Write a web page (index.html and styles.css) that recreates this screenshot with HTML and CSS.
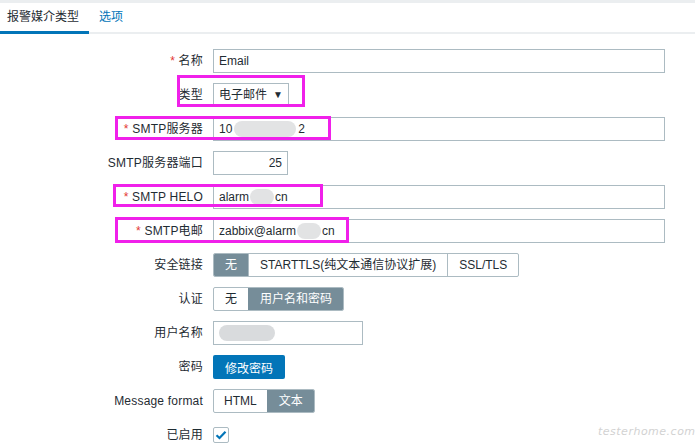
FILE: index.html
```html
<!DOCTYPE html>
<html>
<head>
<meta charset="utf-8">
<link rel="stylesheet" href="styles.css">
</head>
<body>
<div class="topstrip"></div>
<div class="tabs">
  <div class="tab active">报警媒介类型</div>
  <div class="tab link">选项</div>
</div>
<div class="form">
  <div class="label"><span class="req">*</span> 名称</div>
  <div class="field"><div class="input wide">Email</div></div>

  <div class="label">类型</div>
  <div class="field"><div class="input select">电子邮件<span class="arrow">▼</span></div></div>

  <div class="label"><span class="req">*</span> SMTP服务器</div>
  <div class="field"><div class="input wide">10<span class="blur b1"></span>2</div></div>

  <div class="label">SMTP服务器端口</div>
  <div class="field"><div class="input port">25</div></div>

  <div class="label"><span class="req">*</span> SMTP HELO</div>
  <div class="field"><div class="input wide">alarm<span class="blur b2"></span>cn</div></div>

  <div class="label"><span class="req">*</span> SMTP电邮</div>
  <div class="field"><div class="input wide">zabbix@alarm<span class="blur b3"></span>cn</div></div>

  <div class="label">安全链接</div>
  <div class="field"><div class="seg"><span class="on">无</span><span>STARTTLS(纯文本通信协议扩展)</span><span>SSL/TLS</span></div></div>

  <div class="label">认证</div>
  <div class="field"><div class="seg"><span>无</span><span class="on">用户名和密码</span></div></div>

  <div class="label">用户名称</div>
  <div class="field"><div class="input user"><span class="blur b4"></span></div></div>

  <div class="label">密码</div>
  <div class="field"><button class="btn">修改密码</button></div>

  <div class="label">Message format</div>
  <div class="field"><div class="seg"><span class="w1">HTML</span><span class="on">文本</span></div></div>

  <div class="label">已启用</div>
  <div class="field"><span class="check"><svg width="12" height="10" viewBox="0 0 12 10"><path d="M1.5 5.2 L4.5 8 L10.5 1.8" fill="none" stroke="#0275b8" stroke-width="2.2"/></svg></span></div>
</div>

<div class="mark m1"></div>
<div class="mark m2"></div>
<div class="mark m3"></div>
<div class="mark m4"></div>
<div class="water">testerhome.com</div>
</body>
</html>
```

FILE: styles.css
```css
html, body {
  margin: 0;
  padding: 0;
  background: #fff;
  font-family: "Liberation Sans", Arial, "Noto Sans CJK SC", sans-serif;
  font-size: 12px;
  color: #1f2c33;
  width: 695px;
  height: 448px;
  overflow: hidden;
  position: relative;
}
.topstrip {
  height: 3px;
  background: #ebeef0;
}
.tabs {
  display: flex;
  height: 29px;
  border-bottom: 2px solid #ebeef0;
}
.tab {
  padding: 0 10px;
  line-height: 29px;
  height: 29px;
  box-sizing: border-box;
}
.tab.active {
  padding-left: 7px;
  padding-right: 10px;
  border-bottom: 3px solid #0275b8;
  height: 31px;
  margin-bottom: -2px;
  line-height: 28px;
}
.tab.link {
  color: #0275b8;
}
.form {
  display: grid;
  grid-template-columns: 203px 452px;
  column-gap: 10px;
  row-gap: 10px;
  padding-top: 15px;
  grid-auto-rows: 24px;
}
.label {
  text-align: right;
  line-height: 24px;
  white-space: nowrap;
  letter-spacing: 0.2px;
}
.req {
  color: #e33734;
}
.field {
  display: flex;
  align-items: center;
}
.input {
  box-sizing: border-box;
  height: 24px;
  border: 1px solid #acbbc2;
  padding: 0 5px;
  line-height: 22px;
  display: flex;
  align-items: center;
  white-space: nowrap;
}
.wide { width: 452px; }
.select { width: 76px; padding-right: 5px; justify-content: space-between; }
.arrow { font-size: 10px; }
.port { width: 75px; justify-content: flex-end; }
.user { width: 150px; }
.blur {
  display: inline-block;
  height: 16px;
  background: #e2e3e4;
  border-radius: 8px;
}
.b1 { width: 62px; margin: 0 2px; }
.b2 { width: 24px; margin: 0 1px; }
.b3 { width: 24px; margin: 0 1px; }
.b4 { width: 56px; margin-left: 0; background: #d9dbdd; }
.seg {
  display: flex;
  height: 24px;
  box-sizing: border-box;
  border: 1px solid #acbbc2;
  border-radius: 2px;
  overflow: hidden;
}
.seg span {
  padding: 0 11px;
  line-height: 22px;
  border-left: 1px solid #acbbc2;
  white-space: nowrap;
}
.seg span:first-child { border-left: none; }
.seg span.on {
  background: #768d99;
  color: #fff;
  border-left-color: #768d99;
}
.seg .w1 { padding: 0 10px; }
.btn {
  background: #0275b8;
  color: #fff;
  border: none;
  border-radius: 2px;
  height: 24px;
  width: 72px;
  font-family: inherit;
  font-size: 12px;
  padding: 0;
}
.check {
  box-sizing: border-box;
  width: 16px;
  height: 16px;
  border: 1px solid #acbbc2;
  border-radius: 2px;
  display: flex;
  align-items: center;
  justify-content: center;
}
.mark {
  position: absolute;
  box-sizing: border-box;
  border: 3px solid #f020ea;
}
.m1 { left: 177px; top: 75px; width: 128px; height: 32px; }
.m2 { left: 115px; top: 116px; width: 216px; height: 24px; }
.m3 { left: 113px; top: 184px; width: 210px; height: 23px; }
.m4 { left: 115px; top: 217px; width: 234px; height: 26px; }
.water {
  position: absolute;
  left: 598px;
  top: 425px;
  font-family: "DejaVu Sans", sans-serif;
  font-size: 11px;
  font-style: italic;
  color: #d2d2d2;
  letter-spacing: 0.5px;
}
```
